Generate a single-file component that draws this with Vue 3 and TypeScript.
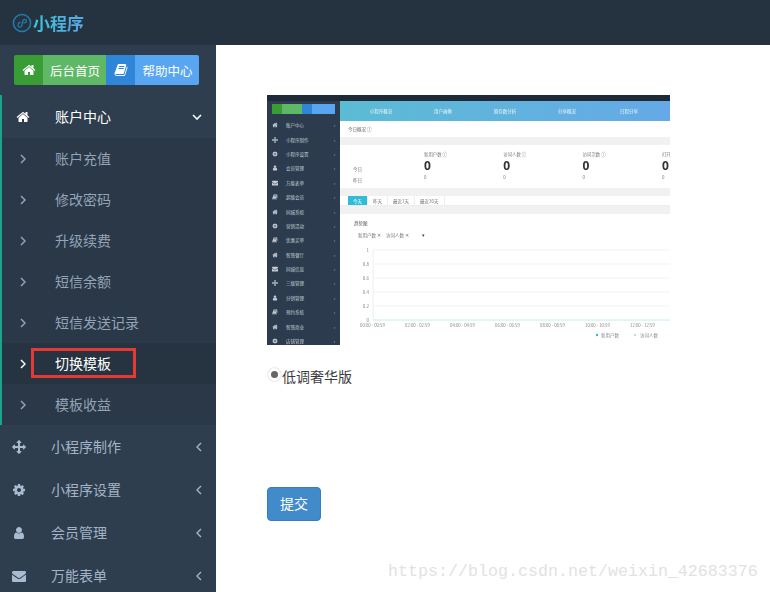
<script setup lang="ts">
const icons: Record<string, string> = {
  home: 'M1472 992v480q0 26-19 45t-45 19h-384v-384h-256v384h-384q-26 0-45-19t-19-45v-480q0-1 .5-3t.5-3l575-474 575 474q1 2 1 6zm223-69l-62 74q-8 9-21 11h-3q-13 0-21-7l-692-577-692 577q-12 8-24 7-13-2-21-11l-62-74q-8-10-7-23.5t11-21.5l719-599q32-26 76-26t76 26l244 204v-195q0-14 9-23t23-9h192q14 0 23 9t9 23v408l219 182q10 8 11 21.5t-7 23.5z',
  book: 'M1703 478q40 57 18 129l-275 906q-19 64-76.5 107.5t-122.5 43.5h-923q-77 0-148.5-53.5t-99.5-131.5q-24-67-2-127 0-4 3-27t4-37q1-8-3-21.5t-3-19.5q2-11 8-21t16.5-23.5 16.5-23.5q23-38 45-91.5t30-91.5q3-10 .5-30t-.5-28q3-11 17-28t17-23q21-36 42-92t25-90q1-9-2.5-32t.5-28q4-13 22-30.5t22-22.5q19-26 42.5-84.5t27.5-96.5q1-8-3-25.5t-2-26.5q2-8 9-18t18-23 17-21q8-12 16.5-30.5t15-35 16-36 19.5-32 26.5-23.5 36-11.5 47.5 5.5l-1 3q38-9 51-9h761q74 0 114 56t18 130l-274 906q-36 119-71.5 153.5t-128.5 34.5h-869q-27 0-38 15-11 16-1 43 24 70 144 70h923q29 0 56-15.5t35-41.5l300-987q7-22 5-57 38 15 59 43zm-1064 2q-4 13 2 22.5t20 9.5h608q13 0 25.5-9.5t16.5-22.5l21-64q4-13-2-22.5t-20-9.5h-608q-13 0-25.5 9.5t-16.5 22.5zm-83 256q-4 13 2 22.5t20 9.5h608q13 0 25.5-9.5t16.5-22.5l21-64q4-13-2-22.5t-20-9.5h-608q-13 0-25.5 9.5t-16.5 22.5z',
  arrows: 'M1792 896q0 26-19 45l-256 256q-19 19-45 19t-45-19-19-45v-128h-384v384h128q26 0 45 19t19 45-19 45l-256 256q-19 19-45 19t-45-19l-256-256q-19-19-19-45t19-45 45-19h128v-384h-384v128q0 26-19 45t-45 19-45-19l-256-256q-19-19-19-45t19-45l256-256q19-19 45-19t45 19 19 45v128h384v-384h-128q-26 0-45-19t-19-45 19-45l256-256q19-19 45-19t45 19l256 256q19 19 19 45t-19 45-45 19h-128v384h384v-128q0-26 19-45t45-19 45 19l256 256q19 19 19 45z',
  cog: 'M1152 896q0-106-75-181t-181-75-181 75-75 181 75 181 181 75 181-75 75-181zm512-109v222q0 12-8 23t-20 13l-185 28q-19 54-39 91 35 50 107 138 10 12 10 25t-9 23q-27 37-99 108t-94 71q-12 0-26-9l-138-108q-44 23-91 38-16 136-29 186-7 28-36 28h-222q-14 0-24.5-8.5t-11.5-21.5l-28-184q-49-16-90-37l-141 107q-10 9-25 9-14 0-25-11-126-114-165-168-7-10-7-23 0-12 8-23 15-21 51-66.5t54-70.5q-27-50-41-99l-183-27q-13-2-21-12.5t-8-23.5v-222q0-12 8-23t19-13l186-28q14-46 39-92-40-57-107-138-10-12-10-24 0-10 9-23 26-36 98.5-107.5t94.5-71.5q13 0 26 10l138 107q44-23 91-38 16-136 29-186 7-28 36-28h222q14 0 24.5 8.5t11.5 21.5l28 184q49 16 90 37l142-107q9-9 24-9 13 0 25 10 129 119 165 170 7 8 7 22 0 12-8 23-15 21-51 66.5t-54 70.5q26 50 41 98l183 28q13 2 21 12.5t8 23.5z',
  user: 'M1536 1399q0 109-62.5 187t-150.5 78h-854q-88 0-150.5-78t-62.5-187q0-85 8.5-160.5t31.5-152 58.5-131 94-89 134.5-34.5q131 128 313 128t313-128q76 0 134.5 34.5t94 89 58.5 131 31.5 152 8.5 160.5zm-256-887q0 159-112.5 271.5t-271.5 112.5-271.5-112.5-112.5-271.5 112.5-271.5 271.5-112.5 271.5 112.5 112.5 271.5z',
  envelope: 'M1792 710v794q0 66-47 113t-113 47h-1472q-66 0-113-47t-47-113v-794q44 49 101 87 362 246 497 345 57 42 92.5 65.5t94.5 48 110 24.5h2q51 0 110-24.5t94.5-48 92.5-65.5q170-123 498-345 57-39 100-87zm0-294q0 79-49 151t-122 123q-376 261-468 325-10 7-42.5 30.5t-54 38-52 32.5-57.5 27-50 9h-2q-23 0-50-9t-57.5-27-52-32.5-54-38-42.5-30.5q-91-64-262-182.5t-205-142.5q-62-42-117-115.5t-55-136.5q0-78 41.5-130t118.5-52h1472q65 0 112.5 47t47.5 113z',
}

const subItems = ['账户充值', '修改密码', '升级续费', '短信余额', '短信发送记录', '切换模板', '模板收益']
const activeSub = '切换模板'

const menus = [
  { icon: 'arrows', label: '小程序制作' },
  { icon: 'cog', label: '小程序设置' },
  { icon: 'user', label: '会员管理' },
  { icon: 'envelope', label: '万能表单' },
]

// the little dashboard inside the preview picture
const thumbMenu = [
  ['home', '账户中心'], ['arrows', '小程序制作'], ['cog', '小程序设置'], ['user', '会员管理'],
  ['envelope', '万能表单'], ['book', '超级会员'], ['home', '同城系统'], ['cog', '营销活动'],
  ['book', '优惠买单'], ['home', '智慧餐厅'], ['envelope', '同城信息'], ['arrows', '三级管理'],
  ['user', '分销管理'], ['book', '预约系统'], ['home', '智慧商业'], ['cog', '店铺管理'],
]
const thumbNav = ['小程序概况', '用户画像', '留存数分析', '分享概况', '日程分享']
// the picture itself is cropped through the last column
const thumbStats = ['新用户数 ⓘ', '访问人数 ⓘ', '访问次数 ⓘ', '打开']
const thumbTabs = ['今天', '昨天', '最近7天', '最近30天']
const gridRows = [
  { label: '1', y: 6 },
  { label: '0.8', y: 20 },
  { label: '0.6', y: 34 },
  { label: '0.4', y: 48 },
  { label: '0.2', y: 62 },
  { label: '0', y: 76 },
]
const xLabels = [
  { t: '00:00 - 00:59', x: 20 },
  { t: '02:00 - 02:59', x: 65 },
  { t: '04:00 - 04:59', x: 110 },
  { t: '06:00 - 06:59', x: 155 },
  { t: '08:00 - 08:59', x: 200 },
  { t: '10:00 - 10:59', x: 245 },
  { t: '12:00 - 12:59', x: 290 },
]
</script>

<template>
  <div class="page">
    <header class="topbar">
      <svg class="logo-mark" viewBox="0 0 20 20" width="20" height="20">
        <circle cx="10" cy="10" r="8.6" fill="none" stroke="#1f7fa8" stroke-width="1.5" />
        <path d="M6 12.5c0 2 3 2.2 3.8 0.2l1-5c.6-2 3.6-1.8 3.6.3 0 1.4-1.4 2-2.6 1.8M8 9.5c-1.2-.1-2 1.2-2 3"
          fill="none" stroke="#1f7fa8" stroke-width="1.3" stroke-linecap="round" />
      </svg>
      <span class="logo-text">小程序</span>
    </header>

    <div class="body">
      <aside class="sidebar">
        <div class="quick">
          <span class="quick-icon green"><svg viewBox="0 0 1792 1792" width="14" height="14"><path :d="icons.home" fill="#fff" /></svg></span>
          <span class="quick-label green-light">后台首页</span>
          <span class="quick-icon blue"><svg viewBox="0 0 1792 1792" width="14" height="14"><path :d="icons.book" fill="#fff" /></svg></span>
          <span class="quick-label blue-light">帮助中心</span>
        </div>

        <div class="open-menu">
          <div class="open-head">
            <svg class="head-icon" viewBox="0 0 1792 1792" width="14" height="14"><path :d="icons.home" fill="#fff" /></svg>
            <span class="txt">账户中心</span>
            <svg class="chev-down" viewBox="0 0 10 6" width="10" height="6"><path d="M1 1l4 4 4-4" fill="none" stroke="#fff" stroke-width="1.6" /></svg>
          </div>
          <div v-for="item in subItems" :key="item" class="sub-row" :class="{ active: item === activeSub }">
            <svg class="chev-right" viewBox="0 0 6 10" width="6" height="10"><path d="M1 1l4 4-4 4" fill="none" stroke="currentColor" stroke-width="1.5" /></svg>
            <span class="txt">{{ item }}</span>
            <i v-if="item === activeSub" class="mark"></i>
          </div>
        </div>

        <div v-for="m in menus" :key="m.label" class="menu-row">
          <svg class="menu-icon" viewBox="0 0 1792 1792" width="14" height="14"><path :d="icons[m.icon]" fill="#a9bbd0" /></svg>
          <span class="txt">{{ m.label }}</span>
          <svg class="chev-left" viewBox="0 0 6 10" width="6" height="10"><path d="M5 1L1 5l4 4" fill="none" stroke="currentColor" stroke-width="1.4" /></svg>
        </div>
      </aside>

      <main class="content">
        <div class="thumb">
          <div class="t-top"></div>
          <div class="t-body">
            <div class="t-side">
              <div class="t-quick">
                <i class="tq g"></i><i class="tq gl"></i><i class="tq b"></i><i class="tq bl"></i>
              </div>
              <div v-for="row in thumbMenu" :key="row[1]" class="t-item">
                <svg viewBox="0 0 1792 1792" width="6" height="6"><path :d="icons[row[0]]" fill="#c4ccd6" /></svg>
                <span>{{ row[1] }}</span>
                <em>›</em>
              </div>
            </div>
            <div class="t-main">
              <div class="t-nav">
                <span v-for="n in thumbNav" :key="n">{{ n }}</span>
              </div>
              <div class="t-title">今日概况 ⓘ</div>
              <div class="t-gap"></div>
              <div class="t-stats">
                <div class="t-labels"><span>今日</span><span>昨日</span></div>
                <div v-for="s in thumbStats" :key="s" class="t-stat">
                  <span class="t-stat-title">{{ s }}</span>
                  <b>0</b>
                  <span class="t-stat-sub">0</span>
                </div>
              </div>
              <div class="t-gap"></div>
              <div class="t-tabs">
                <span v-for="(t, i) in thumbTabs" :key="t" :class="{ on: i === 0 }">{{ t }}</span>
              </div>
              <div class="t-gap"></div>
              <div class="t-chart">
                <div class="t-chart-title">趋势图</div>
                <div class="t-filter"><span>新用户数 ✕</span><span>访问人数 ✕</span><em>▾</em></div>
                <svg class="t-plot" viewBox="0 0 330 104" width="330" height="104">
                  <g v-for="g in gridRows" :key="g.label">
                    <line x1="33" x2="330" :y1="g.y" :y2="g.y" :stroke="g.label === '0' ? '#c5ece8' : '#f3f3f3'" />
                    <text x="29" :y="g.y + 1.5" text-anchor="end" class="t-axis">{{ g.label }}</text>
                  </g>
                  <line x1="33" x2="33" y1="6" y2="76" stroke="#e6f2f1" />
                  <text v-for="l in xLabels" :key="l.t" :x="l.x" y="83" class="t-axis t-x">{{ l.t }}</text>
                  <circle cx="257" cy="91" r="1.2" fill="#3cb6d0" />
                  <text x="261" y="93" class="t-axis">新用户数</text>
                  <circle cx="295" cy="91" r="1.2" fill="#b8e4e0" />
                  <text x="300" y="93" class="t-axis">访问人数</text>
                </svg>
              </div>
            </div>
          </div>
        </div>

        <label class="choice">
          <i class="radio"></i>
          <span class="choice-text">低调奢华版</span>
        </label>

        <button class="submit" type="button">提交</button>
      </main>
    </div>

    <div class="watermark">https://blog.csdn.net/weixin_42683376</div>
  </div>
</template>

<style>
html, body { margin: 0; background: #fff; }
</style>

<style scoped>
.page {
  position: relative;
  width: 770px;
  height: 592px;
  overflow: hidden;
  font-family: "Noto Sans CJK SC", "Liberation Sans", sans-serif;
  font-size: 14px;
  color: #333;
}

.topbar {
  height: 45px;
  background: #253240;
  display: flex;
  align-items: center;
  padding-left: 12px;
  box-sizing: border-box;
}
.logo-mark { margin-right: 1px; }
.logo-text {
  font-size: 17px;
  font-weight: 700;
  background: linear-gradient(90deg, #39c6d6, #5aa5e6);
  -webkit-background-clip: text;
  background-clip: text;
  color: transparent;
}

.body { display: flex; height: 547px; }

.sidebar {
  width: 216px;
  flex: none;
  background: #2e3e4f;
  color: #a4b4c8;
  overflow: hidden;
}

.quick {
  display: flex;
  height: 30px;
  margin: 10px 17px 10px 14px;
  border-radius: 2px;
  overflow: hidden;
  color: #fff;
  font-size: 12.5px;
}
.quick-icon { width: 29px; display: flex; align-items: center; justify-content: center; }
.quick-label { display: flex; align-items: center; justify-content: center; padding-left: 1px; box-sizing: border-box; }
.green { background: #3a9c34; }
.green-light { background: #5fb866; width: 63px; }
.blue { background: #2f86d8; }
.blue-light { background: #58a6f1; width: 64px; }

/* CJK glyphs sit a pixel low in their line box */
.txt { margin-bottom: 2px; }

.open-menu {
  border-left: 2px solid #19a48c;
  background: #2a3847;
}
.open-head {
  height: 43px;
  display: flex;
  align-items: center;
  background: #2e3e4f;
  color: #fff;
}
.head-icon { margin: 0 25px 0 14px; }
.chev-down { margin-left: auto; margin-right: 14px; }

.sub-row {
  position: relative;
  height: 41px;
  display: flex;
  align-items: center;
  color: #93a3b8;
}
.sub-row.active { background: #263340; color: #fff; }
.chev-right { margin: 0 29px 0 18px; }
.mark {
  position: absolute;
  left: 29px;
  top: 5px;
  width: 105px;
  height: 30px;
  box-sizing: border-box;
  border: 3px solid #e53935;
}

.menu-row {
  height: 43px;
  display: flex;
  align-items: center;
  color: #a4b4c8;
}
.menu-icon { margin: 0 25px 0 12px; }
.chev-left { margin-left: auto; margin-right: 14px; }

.content {
  flex: 1;
  padding: 50px 0 0 51px;
  display: flex;
  flex-direction: column;
  align-items: flex-start;
}

.thumb {
  width: 403px;
  height: 250px;
  overflow: hidden;
  display: flex;
  flex-direction: column;
  font-size: 4.5px;
  color: #777;
  filter: blur(0.45px);
}
.t-top { height: 6px; background: #1f2a38; flex: none; }
.t-body { display: flex; flex: 1; min-height: 0; }

.t-side { width: 73px; flex: none; background: #2c3c4e; color: #c4ccd6; }
.t-quick { display: flex; height: 10px; margin: 3px 5px 4px; }
.tq { display: block; }
.tq.g { width: 10px; background: #3a9c34; }
.tq.gl { width: 20px; background: #5fb866; }
.tq.b { width: 10px; background: #2f86d8; }
.tq.bl { width: 23px; background: #58a6f1; }
.t-item { height: 14.4px; display: flex; align-items: center; padding-left: 5px; }
.t-item span { margin-left: 8px; }
.t-item em { margin-left: auto; margin-right: 5px; font-style: normal; }

.t-main { flex: 1; min-width: 0; display: flex; flex-direction: column; overflow: hidden; }
.t-nav {
  height: 20px;
  flex: none;
  background: linear-gradient(90deg, #5cbcd4, #65a9e6);
  color: #e8f6fb;
  display: grid;
  grid-template-columns: repeat(5, 62px);
  align-items: center;
  text-align: center;
  padding-left: 10px;
}
.t-title { height: 16px; flex: none; display: flex; align-items: center; padding-left: 8px; color: #666; }
.t-gap { height: 8px; flex: none; background: #f1f1f1; }
.t-stats { height: 43px; flex: none; display: flex; padding-left: 13px; }
.t-labels { width: 71px; flex: none; display: flex; flex-direction: column; justify-content: flex-end; gap: 5px; padding-bottom: 5px; }
.t-stat { width: 79.3px; flex: none; display: flex; flex-direction: column; padding-top: 6px; }
.t-stat b { font-size: 12px; line-height: 17px; color: #333; font-family: "Open Sans", sans-serif; }
.t-stat-title, .t-stat-sub { white-space: nowrap; font-size: 4.4px; }

.t-tabs { height: 9px; flex: none; display: flex; padding-left: 8px; align-items: stretch; border-bottom: 1px solid #eee; }
.t-tabs span { padding: 0 5px; display: flex; align-items: center; border-right: 1px solid #eee; }
.t-tabs .on { background: #2fbcd6; color: #fff; }

.t-chart { flex: 1; min-height: 0; padding-top: 5px; }
.t-chart-title { padding-left: 14px; color: #555; line-height: 8px; }
.t-filter { display: flex; gap: 5px; padding: 5px 0 0 18px; line-height: 6px; }
.t-filter em { font-style: normal; margin-left: 8px; color: #444; }
.t-plot { display: block; margin-top: 6px; }
.t-axis { font-size: 4.5px; fill: #888; }
.t-x { font-size: 4.3px; }

.choice { display: flex; align-items: center; margin-top: 23px; height: 18px; color: #3c3c3c; }
.choice-text { margin-bottom: 2px; }
.radio {
  width: 13px;
  height: 13px;
  border-radius: 50%;
  background: #fff;
  box-shadow: 0 0 2px #bbb;
  margin: 0 1px 6px 1px;
  display: flex;
  align-items: center;
  justify-content: center;
}
.radio::after { content: ""; width: 7px; height: 7px; border-radius: 50%; background: #666; }

.submit {
  margin-top: 101px;
  width: 54px;
  height: 34px;
  padding: 0 0 2px;
  border: 1px solid #357ebd;
  border-radius: 4px;
  background: #428bca;
  color: #fff;
  font: inherit;
}

.watermark {
  position: absolute;
  left: 388px;
  top: 562px;
  font-family: "Liberation Mono", monospace;
  font-size: 16.67px;
  line-height: 20px;
  color: #e2e2e2;
  white-space: nowrap;
}
</style>
